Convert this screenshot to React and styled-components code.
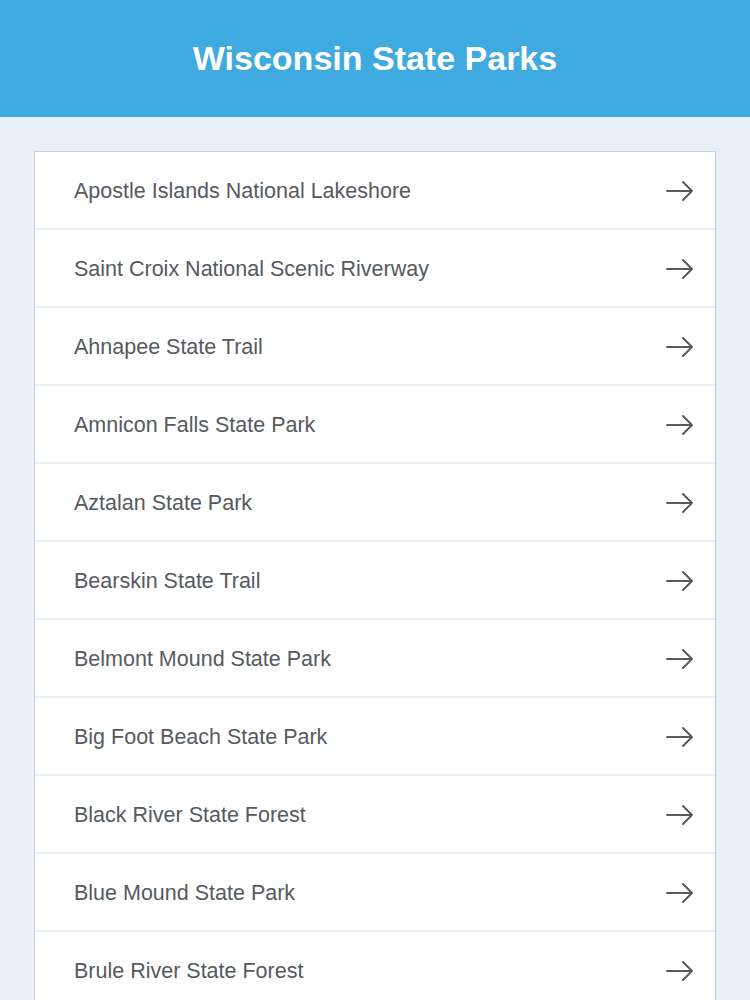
import styled, { createGlobalStyle } from "styled-components";

const GlobalStyle = createGlobalStyle`
  body {
    margin: 0;
    background: #eaf0f7;
    font-family: "Liberation Sans", Arial, sans-serif;
  }
`;

const parks = [
  "Apostle Islands National Lakeshore",
  "Saint Croix National Scenic Riverway",
  "Ahnapee State Trail",
  "Amnicon Falls State Park",
  "Aztalan State Park",
  "Bearskin State Trail",
  "Belmont Mound State Park",
  "Big Foot Beach State Park",
  "Black River State Forest",
  "Blue Mound State Park",
  "Brule River State Forest",
];

const Arrow = () => (
  <svg width="30" height="24" viewBox="0 0 30 24" fill="none">
    <path
      d="M2 12H27M18 3L27 12L18 21"
      stroke="#555a5f"
      strokeWidth="2"
      strokeLinecap="round"
      strokeLinejoin="round"
    />
  </svg>
);

const App = () => (
  <Page>
    <GlobalStyle />
    <Header>
      <Title>Wisconsin State Parks</Title>
    </Header>
    <Content>
      <List>
        {parks.map((p) => (
          <Row key={p}>
            <Name>{p}</Name>
            <Arrow />
          </Row>
        ))}
      </List>
    </Content>
  </Page>
);

export default App;

const Page = styled.div`
  height: 100vh;
  overflow: hidden;
`;

const Header = styled.header`
  height: 117px;
  background: #3eaae0;
  display: flex;
  align-items: center;
  justify-content: center;
`;

const Title = styled.h1`
  margin: 0;
  color: #fff;
  font-size: 34px;
  font-weight: bold;
`;

const Content = styled.main`
  padding: 34px 34px 0;
`;

const List = styled.ul`
  list-style: none;
  margin: 0;
  padding: 0;
  background: #fff;
  border: 1px solid #c9cdd3;
  border-bottom: none;
`;

const Row = styled.li`
  height: 76px;
  display: flex;
  align-items: center;
  justify-content: space-between;
  padding: 2px 20px 0 39px;
  box-sizing: border-box;
  height: 78px;
  border-bottom: 2px solid #eceff2;
`;

const Name = styled.span`
  font-size: 21.5px;
  color: #555a5f;
`;
